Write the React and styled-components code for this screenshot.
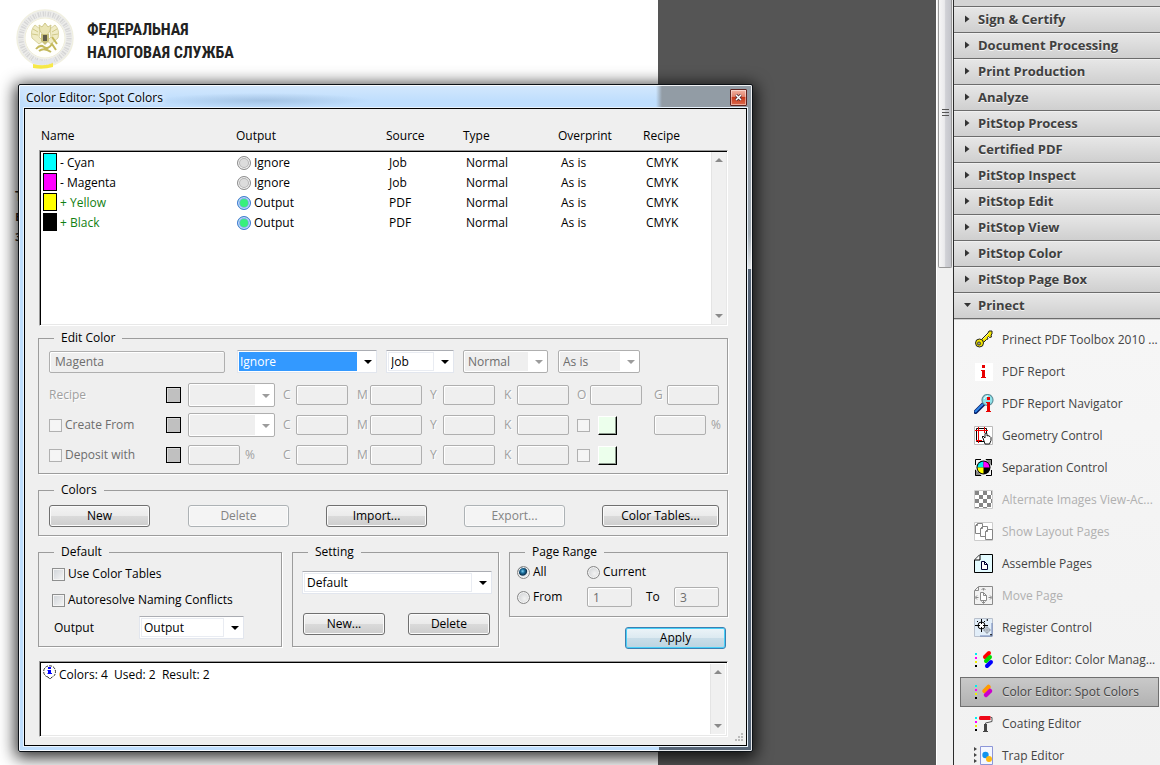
import React, { useState } from 'react';
import styled, { createGlobalStyle, css } from 'styled-components';

const GlobalStyle = createGlobalStyle`
  * {
    box-sizing: border-box;
  }

  body {
    margin: 0;
    overflow: hidden;
    font-family: 'Open Sans', 'Noto Sans', sans-serif;
    font-size: 12px;
    line-height: 16px;
    color: #000;
  }

  button, input, select {
    font: inherit;
    color: inherit;
    margin: 0;
  }
`;

/* ---------- application frame ---------- */

const Workspace = styled.div`
  display: flex;
  height: 100vh;
  background: #555;
`;

const Viewer = styled.main`
  position: relative;
  flex: 1;
  min-width: 0;
  overflow: hidden;
`;

const Sheet = styled.article`
  width: 658px;
  height: 100%;
  padding: 7px 15px;
  background: #fff;
`;

const Letterhead = styled.header`
  display: flex;
  align-items: center;
  gap: 12px;
  height: 64px;
`;

const LetterheadTitle = styled.h1`
  margin: 0;
  padding-top: 4px;
  font-family: 'Liberation Sans Narrow', 'Roboto Condensed', 'Open Sans Condensed', 'DejaVu Sans Condensed', sans-serif;
  font-size: 16px;
  line-height: 23px;
  font-weight: 700;
  color: #222;
`;

const SheetBody = styled.div`
  padding-top: 115px;
  font-size: 14px;
  line-height: 20px;
  font-weight: 600;
  color: #222;
`;

const DocScroll = styled.div`
  width: 17px;
  height: 100%;
  padding: 0 1px;
  background: #f0f0f0;
  border-left: 1px solid #fff;
`;

const DocThumb = styled.div`
  display: flex;
  align-items: center;
  justify-content: center;
  height: 35vh;
  padding-bottom: 41px;
  border: 1px solid #989898;
  border-top: 0;
  border-radius: 0 0 2px 2px;
  background: linear-gradient(to right, #f6f6f6 0%, #eaeaec 45%, #d0d1d6 55%, #c4c5cb 100%);
`;

/* ---------- dialog ---------- */

const Dialog = styled.section`
  position: absolute;
  left: 18px;
  top: 84px;
  width: 735px;
  padding: 0 5px 5px;
  border: 1px solid #0c1116;
  border-radius: 2px;
  background:
    linear-gradient(#566577, #566577) right bottom / 93px 6px no-repeat,
    linear-gradient(#566577, #566577) right bottom / 6px 482px no-repeat,
    linear-gradient(to right, transparent 637px, #929ca5 643px) 0 0 / 100% 24px no-repeat,
    linear-gradient(#8f9aa5, #9fa9b2 80%, #e6e9ec) right top / 6px 186px no-repeat,
    radial-gradient(closest-side, rgba(96, 130, 168, 0.3), transparent) 136px 8px / 215px 15px no-repeat,
    linear-gradient(#d4e8fd, #bfdefd 16px, #bfdefd);
  box-shadow: inset 0 0 0 1px rgba(255, 255, 255, 0.85), 0 3px 16px 3px rgba(0, 0, 0, 0.8);
`;

const TitleBar = styled.header`
  display: flex;
  align-items: center;
  justify-content: space-between;
  height: 23px;
  padding: 2px 0 0 2px;
`;

const Title = styled.h2`
  margin: 0;
  font-size: 12px;
  font-weight: 400;
  text-shadow: 0 0 5px #fff, 0 0 8px #fff;
`;

const CloseButton = styled.button`
  display: grid;
  place-items: center;
  width: 17px;
  height: 17px;
  padding: 0;
  border: 1px solid #5e2320;
  border-radius: 1px;
  background: linear-gradient(#f3b4a3, #e0806a 45%, #c8391a 50%, #dc6a4d);
  box-shadow: inset 0 0 0 1px rgba(255, 255, 255, 0.45);
`;

const Client = styled.div`
  position: relative;
  padding: 0 18px 8px 13px;
  border: 1px solid #000;
  background: #efefef;
  box-shadow: 0 0 0 1px #e9f3fd;
`;

const ListArea = styled.div`
  display: grid;
  grid-template-columns: 1fr 17px;
  grid-template-rows: 41px 176px;
  margin-left: 1px;
`;

const sunken = css`
  border: 1px solid #999;
  border-right-color: #fff;
  border-bottom-color: #fff;
  box-shadow: inset 1px 1px 0 #000, inset -1px -1px 0 #e8e8e8;
  background: #fff;
`;

const InkTable = styled.table`
  display: grid;
  grid-template-rows: subgrid;
  grid-area: 1 / 1 / 3 / 3;
`;

const InkHead = styled.thead`
  display: block;
  padding: 19px 0 0 2px;
`;

const InkBody = styled.tbody`
  display: block;
  padding: 2px 1px;
  ${sunken}
`;

const InkRow = styled.tr`
  display: grid;
  grid-template-columns: 195px 150px 77px 95px 85px 1fr;
  align-items: center;
`;

const HeadCell = styled.th`
  padding: 0;
  font-weight: 400;
  text-align: left;
`;

const Cell = styled.td`
  display: flex;
  align-items: center;
  gap: 3px;
  height: 20px;
  padding: 0 0 0 ${({ $inset = 3 }) => $inset}px;
  color: ${({ $used }) => ($used ? '#128012' : '#000')};
`;

const Ink = styled.span`
  align-self: flex-start;
  width: 14px;
  height: 18px;
  border: 1px solid #000;
  background: ${({ $color }) => $color};
`;

const Lamp = styled.span`
  width: 14px;
  height: 14px;
  border: 1px solid ${({ $on }) => ($on ? '#4677d6' : '#8e8e8e')};
  border-radius: 50%;
  background: ${({ $on }) => ($on ? '#38f07c' : '#dcdcdc')};
  box-shadow: inset 0 0 0 1px ${({ $on }) => ($on ? '#c8dcff' : '#f6f6f6')},
    inset 0 0 0 2px ${({ $on }) => ($on ? '#7fb0e8' : '#b4b4b4')};
`;

const ScrollTrack = styled.div`
  display: flex;
  flex-direction: column;
  justify-content: space-between;
  align-items: center;
  width: 15px;
  padding: 6px 0;
  background: #f0f0f0;
  border-left: 1px solid #e4e4e4;
`;

const ListScroll = styled(ScrollTrack)`
  grid-area: 2 / 2;
  margin: 2px 0;
`;

const Group = styled.fieldset`
  min-width: 0;
  margin: 0;
  padding: 0;
  border: 1px solid #9c9c9c;
  box-shadow: 1px 1px 0 #fff;
`;

const Legend = styled.legend`
  height: 16px;
  margin-left: 15px;
  padding: 0 7px;
`;

const GroupBody = styled.div`
  padding: ${({ $pad }) => $pad};
`;

const Stack = styled.div`
  display: flex;
  flex-direction: column;
  gap: 8px;
  padding-top: 4px;
`;

const Columns = styled.div`
  display: grid;
  grid-template-columns: 244px 207px 1fr;
  align-items: start;
  gap: 10px;
`;

/* ---------- controls ---------- */

const Button = styled.button`
  height: 22px;
  width: ${({ $width = 101 }) => $width}px;
  padding: 0;
  border: 1px solid #707070;
  border-radius: 3px;
  background: linear-gradient(#f3f3f3, #ebebeb 48%, #dadada 52%, #cdcdcd);
  box-shadow: inset 0 0 0 1px #fbfbfb;

  &:disabled {
    border-color: #adb2b5;
    background: #f4f4f4;
    color: #838383;
  }
`;

const PrimaryButton = styled(Button)`
  border-color: #3c7fb1;
  background: linear-gradient(#ecf4f8, #ddeaf1 48%, #c9dde8 52%, #bcd4e1);
  box-shadow: inset 0 0 0 1px #48d0f8;
`;

const Field = styled.input`
  width: ${({ $width = 52 }) => $width}px;
  height: ${({ $height = 20 }) => $height}px;
  padding: 0 5px;
  border: 1px solid #afafaf;
  border-radius: 2px;
  background: #efefef;
  color: #6d6d6d;
  box-shadow: inset 1px 1px 0 #fff;
`;

const ComboFrame = styled.span`
  display: grid;
  grid-template-columns: 1fr 18px;
  align-items: center;
  width: ${({ $width }) => $width}px;
  height: ${({ $height = 23 }) => $height}px;
  padding: 1px;
  border: 1px solid #e2e6ee;
  border-top-color: #abadb3;
  border-radius: 1px;
  background: #fff;

  ${({ $off }) => $off && css`
    border-color: #afafaf;
    border-radius: 2px;
  `}
`;

const NativeSelect = styled.select`
  appearance: none;
  width: 100%;
  height: 100%;
  padding: 0 2px;
  border: 1px solid #e9ecf2;
  border-radius: 0;
  outline: none;
  background: #fff;

  &:disabled {
    border-color: #efefef;
    background: #efefef;
    color: #6d6d6d;
    opacity: 1;
  }

  ${({ $active }) => $active && css`
    padding: 0;
    border-color: #39f;
    background: #39f;
    color: #fff;
  `}
`;

const Arrow = styled.svg`
  justify-self: end;
  margin: 1px 3px 0 0;
  fill: ${({ $off }) => ($off ? '#9c9c9c' : '#000')};
`;

const Check = styled.input`
  appearance: none;
  width: 13px;
  height: 13px;
  border: 1px solid #8e8f8f;
  background: linear-gradient(135deg, #cfd3d8, #f6f6f6);
  background-clip: content-box;
  padding: 1px;
  box-shadow: inset 0 0 0 1px #f4f4f4;

  &:disabled {
    border-color: #b1b1b1;
    background: #f5f5f5;
  }
`;

const Radio = styled.input`
  appearance: none;
  width: 13px;
  height: 13px;
  border: 1px solid #868686;
  border-radius: 50%;
  background: radial-gradient(circle at 60% 60%, #f2f2f2, #c9cccf);
  box-shadow: inset 0 0 0 1px #f4f4f4;

  &:checked {
    background: radial-gradient(circle at 42% 38%, #7fd0f2 0, #1b6f9e 2px, #0d3350 4px, #e4e8ec 5px);
  }
`;

const OptionLabel = styled.label`
  display: flex;
  align-items: center;
  gap: 3px;
  height: ${({ $height = 26 }) => $height}px;
  color: ${({ $off }) => ($off ? '#6d6d6d' : '#000')};
`;

const TopRow = styled.div`
  display: grid;
  grid-template-columns: 188px 149px 77px 95px 1fr;
  align-items: center;
  height: 23px;
  margin-bottom: 7px;
`;

const MixRow = styled.div`
  display: grid;
  grid-template-columns: 117px 22px 95px 74px 73px 74px 73px 77px 1fr;
  align-items: center;
  height: 30px;
`;

const Dim = styled.span`
  color: #a0a0a0;
  text-shadow: 1px 1px 0 #fff;
`;

const Channel = styled.label`
  display: grid;
  grid-template-columns: 13px 52px;
  align-items: center;
  color: #a0a0a0;
  text-shadow: 1px 1px 0 #fff;
`;

const Percent = styled.label`
  display: flex;
  align-items: center;
  gap: 5px;
  color: #a0a0a0;
`;

const Patch = styled.span`
  width: 15px;
  height: 16px;
  border: 1px solid #000;
  background: #c0c0c0;
  box-shadow: inset 1px 1px 0 #d8d8d8;
`;

const PickCell = styled.span`
  display: flex;
  align-items: center;
  gap: 8px;
`;

const ColorPick = styled.button`
  width: 19px;
  height: 19px;
  padding: 0;
  border: 1px solid #000;
  border-top-color: #fff;
  border-left-color: #fff;
  background: #ecffec;
  box-shadow: inset -1px -1px 0 #8c988c;
`;

const ButtonGrid = styled.div`
  display: grid;
  grid-template-columns: 139px 138px 138px 138px 1fr;
`;

const OutputRow = styled.div`
  display: grid;
  grid-template-columns: 85px auto;
  align-items: center;
  margin: 3px 0 0 2px;
`;

const ButtonPair = styled.div`
  display: flex;
  gap: 23px;
  padding: 19px 0 0 1px;
`;

const RangeGrid = styled.div`
  display: grid;
  grid-template-columns: 70px 59px 28px 1fr;
  align-items: center;
`;

const CurrentOption = styled(OptionLabel)`
  grid-column: span 3;
`;

const RangeColumn = styled.div`
  display: flex;
  flex-direction: column;
  align-items: flex-end;
  gap: 10px;
`;

const RangeGroup = styled(Group)`
  align-self: stretch;
`;

const ApplySlot = styled.div`
  display: flex;
  padding-right: 2px;
`;

const LogBox = styled.div`
  display: flex;
  height: 76px;
  margin: 12px 0 0 1px;
  padding: 2px;
  ${sunken}
`;

const LogText = styled.output`
  display: flex;
  flex: 1;
  gap: 2px;
  padding: 1px 0 0 1px;
  white-space: pre;
`;

const LogLine = styled.span`
  padding-top: 2px;
`;

const Grip = styled.svg`
  position: absolute;
  right: 3px;
  bottom: 3px;
`;

/* ---------- tools pane ---------- */

const Pane = styled.aside`
  flex: 0 0 207px;
  overflow: hidden;
  border-left: 1px solid #2b2b2b;
  background: linear-gradient(#fafafa, #f1f1f1);
  color: #444;
`;

const PaneTop = styled.div`
  height: 6px;
  background: #d4d4d4;
`;

const Section = styled.button`
  display: flex;
  align-items: center;
  gap: 6px;
  width: 100%;
  height: 26px;
  padding: 0 0 2px 10px;
  border: 0;
  border-top: 1px solid #6c6c6c;
  background: linear-gradient(#fafafa 0, #e6e6e6 1px, #cfcfcf);
  font-size: 13px;
  font-weight: 700;
  color: #404040;
  text-shadow: 0 1px 0 #f4f4f4;
`;

const ToolList = styled.ul`
  display: flex;
  flex-direction: column;
  gap: 2px;
  margin: 0;
  padding: 6px 1px 0 6px;
  border-top: 1px solid #6c6c6c;
  box-shadow: inset 0 1px 0 #cfcfcf;
  list-style: none;
`;

const Tool = styled.button`
  display: flex;
  align-items: center;
  gap: 8px;
  width: 100%;
  height: 30px;
  padding: 0 0 0 13px;
  border: 1px solid transparent;
  background: none;
  white-space: nowrap;
  color: #444;

  &:disabled {
    color: #b0b0b0;
  }

  ${({ $active }) => $active && css`
    border-color: #6f6f6f;
    background: linear-gradient(#c9c9c9, #b2b2b2);
    text-shadow: 0 1px 0 #d8d8d8;
  `}
`;

/* ---------- drawings ---------- */

const Emblem = () => (
  <svg width="60" height="64" viewBox="0 0 60 64" aria-hidden="true">
    <circle cx="30" cy="31" r="28" fill="#fdfdf9" stroke="#f1f0e0" strokeWidth="1.500" />
    <circle cx="30" cy="31" r="24" fill="none" stroke="#ececea" strokeWidth="7" />
    <circle cx="30" cy="31" r="24" fill="none" stroke="#d6d6d6" strokeWidth="5" strokeDasharray="1.500 1 .8 1.700" />
    <circle cx="30" cy="31" r="20" fill="#fffffc" stroke="#efedd8" strokeWidth="1" />
    <path d="M20 18q-5 5-3 13l7 6 4-3-4-4 1-8zM40 18q5 5 3 13l-7 6-4-3 4-4-1-8z" fill="#f0ecc6" stroke="#d8d29c" />
    <path d="M18 22l5 3M17 27l6 1M42 22l-5 3M43 27l-6 1" stroke="#d0c988" />
    <path d="M24 18l3 2 3-4 3 4 3-2-1 6-3 4h-4l-3-4z" fill="#eae5b4" stroke="#cfc88a" />
    <path d="M26 27h8v7l-4 4-4-4z" fill="#c9c17c" />
    <path d="M28 28h4v6h-4z" fill="#5e5b48" />
    <path d="M21 42q4-5 8-2t8-3l4 6M24 44q5-4 12 1M37 30l5 7" fill="none" stroke="#c4b95c" strokeWidth="2" />
    <path d="M17 52q12 4 22-1v4q-11 5-22 1z" fill="#e3e6ee" />
    <path d="M18 57q11 3 20-1v4q-10 3-20 1z" fill="#f8ea4a" />
  </svg>
);

const ScrollArrow = ({ down }) => (
  <svg width="8" height="4" viewBox="0 0 8 4" aria-hidden="true">
    <path d={down ? 'M0 0h8L4 4z' : 'M0 4h8L4 0z'} fill="#8a8a8a" />
  </svg>
);

const SectionMark = ({ open }) => (
  <svg width="8" height="8" viewBox="0 0 8 8" aria-hidden="true">
    <path d={open ? 'M0 2h7L3.500 6z' : 'M1 0.500v7L5.500 4z'} fill="#333" />
  </svg>
);

const InfoBubble = () => (
  <svg width="14" height="15" viewBox="0 0 14 15" aria-hidden="true">
    <path
      d="M5 12C-1 11-1 1 6.500.8S14 11 9 12l-2 2.200z"
      fill="#fff"
      stroke="#333"
      strokeDasharray="3 1"
    />
    <path d="M5 2h3v2H5zM4.500 5H8v3h1v1H4.500V8H5V6h-.5z" fill="#00f" />
  </svg>
);

const InkDots = () => (
  <>
    <path d="M1 3h2v2H1z" fill="#0ee" />
    <path d="M1 7h2v2H1z" fill="#f0f" />
    <path d="M1 11h2v2H1z" fill="#ee0" />
    <path d="M1 15h2v2H1z" fill="#000" />
  </>
);

const icons = {
  key: (
    <g fill="#f5e800" stroke="#222">
      <path d="M7.500 9.500L14 3l1-2h3v3l-1 1 .5 2-2 .5-1-1-1 1 .5 1.500-1.500.5-3 3z" />
      <circle cx="5.500" cy="13" r="4" />
      <circle cx="5" cy="13.500" r="1.600" fill="#999" strokeWidth="0.800" />
      <path d="M9 9l6-6" stroke="#fff8a0" strokeWidth="0.800" />
    </g>
  ),
  info: (
    <g>
      <path d="M1 1h18v18H1z" fill="#fff" />
      <path d="M8 3h3v3H8zM7 8h4v7h1v1H7v-1h1V9H7z" fill="#e80000" />
    </g>
  ),
  navigator: (
    <g>
      <path d="M1.500 18l8-8" stroke="#001a66" strokeWidth="4" strokeLinecap="round" />
      <path d="M1.500 17.500l7-7" stroke="#2f86e8" strokeWidth="2" strokeLinecap="round" />
      <circle cx="13.500" cy="6" r="5.500" fill="#8fe3ea" stroke="#5e8f9a" strokeWidth="1.200" />
      <path d="M10 5q1-3 4-3" stroke="#fff" fill="none" />
      <path d="M13 3h3v3h-3zM12 8h4v9h1v1h-5v-1h1V9h-1z" fill="#e80000" />
    </g>
  ),
  geometry: (
    <g>
      <path d="M0.500 0.500h18v18h-18z" fill="#fff" stroke="#bbb" />
      <path d="M2.500 2.500h10v13h-10z" fill="none" stroke="#000" />
      <path d="M4.500 1v16M1 4.500h13M10.500 1v6M2 14.500h6" stroke="#e00" />
      <path d="M9 12l-1-1 1-1 2 2V7.500l1-.5 1 .5V10l1-.5 1 .5 1 .5 1 1v3L15.500 18H11z" fill="#fff" stroke="#000" strokeWidth="0.900" />
    </g>
  ),
  separation: (
    <g>
      <path d="M11 1h7v7zM1 11v7h7z" fill="#888" />
      <path d="M1.500 7V1.500H7M12 1.500h5.500V7M1.500 12v5.500H7M12 17.500h5.500V12" fill="none" stroke="#000" />
      <circle cx="9.500" cy="9.500" r="7" fill="#000" />
      <path d="M9.500 9.500V3.500a6 6 0 0 0-6 6z" fill="#0ee" />
      <path d="M9.500 9.500h6a6 6 0 0 0-6-6z" fill="#f0f" />
      <path d="M9.500 9.500h-6a6 6 0 0 0 6 6z" fill="#ff0" />
    </g>
  ),
  checker: (
    <g>
      <path d="M0.500 0.500h18v18h-18z" fill="#fff" stroke="#ccc" />
      <path
        d="M1 1h4v4H1zM9 1h4v4H9zM5 5h4v4H5zM13 5h4v4h-4zM1 9h4v4H1zM9 9h4v4H9zM5 13h4v4H5zM13 13h4v4h-4zM17 1h1v4h-1zM17 9h1v4h-1zM1 17h4v1H1zM9 17h4v1H9z"
        fill="#858585"
      />
    </g>
  ),
  layout: (
    <g fill="#fff" stroke="#858585">
      <path d="M0.500 0.500h18v18h-18z" stroke="#ccc" />
      <path d="M1.500 11.500v-8l2-2h5v10zM1.500 3.500h2v-2" />
      <path d="M6.500 14.500v-8l2-2h5v10zM6.500 6.500h2v-2" />
      <path d="M11.500 17.500v-8l2-2h5v10zM11.500 9.500h2v-2" />
    </g>
  ),
  assemble: (
    <g>
      <path d="M0.500 18.500V6L6 .5h12.500v18z" fill="#e4fbff" stroke="#000" />
      <path d="M1 6h5V1" fill="#fff" stroke="#000" />
      <path d="M7.500 7.500h3l3 3v5h-6z" fill="#fff" stroke="#003" />
      <path d="M10.500 7.500v3h3" fill="none" stroke="#003" />
    </g>
  ),
  move: (
    <g fill="none" stroke="#8a8a8a">
      <path d="M0.500 18.500V4.500l4-4h14v18z" fill="#f2f2f2" />
      <path d="M1 4.500h3.500V1" />
      <path d="M6.500 6.500h3l3 3v5h-6zM9.500 6.500v3h3" fill="#fff" />
      <path d="M9.500 4.500v-2m-2 1.500l2-2 2 2M9.500 15v2m-2-1.500l2 2 2-2M4.500 11.500h-3m1.500-2l-2 2 2 2M14.500 11.500h3m-1.500-2l2 2-2 2" />
    </g>
  ),
  register: (
    <g fill="none">
      <path d="M0.500 0.500h18v18h-18z" fill="#e2eef9" stroke="#b9c0cc" />
      <path d="M18 5v13H6" stroke="#6f84b8" />
      <circle cx="7.500" cy="7.500" r="3.500" fill="#fff" stroke="#000" />
      <path d="M7.500 1v5M7.500 9v5M1 7.500h5M9 7.500h5" stroke="#000" />
      <circle cx="13" cy="12" r="2.500" stroke="#9aa2ac" />
      <path d="M13 8v8M9 12h8" stroke="#9aa2ac" />
      <path d="M12 2l2-1v2zM16 16h2l-1 2z" fill="#000" />
      <path d="M3 3l1 1M11 3l-1 1" stroke="#000" />
    </g>
  ),
  manage: (
    <g>
      <InkDots />
      <g strokeWidth="4" strokeLinecap="round">
        <path d="M11 7l4-4" stroke="#f00" />
        <path d="M12 11l4-4" stroke="#0d0" />
        <path d="M13 16l4-4" stroke="#00f" />
      </g>
    </g>
  ),
  spot: (
    <g>
      <InkDots />
      <g strokeWidth="4.500" strokeLinecap="round">
        <path d="M10.500 9l4-4" stroke="#f90" />
        <path d="M12 13l4-4" stroke="#c0c" />
      </g>
    </g>
  ),
  coating: (
    <g>
      <InkDots />
      <path d="M5 3.500q0-1.500 1.500-1.500h10v4h-10Q5 6 5 4.500z" fill="#ee0818" />
      <path d="M16.500 3.500h1.500v4l-6.500 1.500v2" fill="none" stroke="#555" />
      <path d="M10 10h3v7h1v1H9v-1h1z" fill="#444" />
    </g>
  ),
  trap: (
    <g>
      <path d="M0 1l3 2-3 2zM0 7l3 2-3 2zM0 13l3 2-3 2z" fill="#444" />
      <path d="M6.500 0.500h12v18h-12z" fill="#f4f7ff" stroke="#8c96d8" />
      <circle cx="11.500" cy="9" r="3.200" fill="#1093ee" />
      <circle cx="15" cy="13" r="3" fill="#fcb813" />
    </g>
  ),
};

const ToolIcon = ({ name }) => (
  <svg width="20" height="20" viewBox="0 0 20 20" aria-hidden="true">
    {icons[name]}
  </svg>
);

/* ---------- data ---------- */

const inks = [
  { name: 'Cyan', color: '#0ff', used: false, source: 'Job' },
  { name: 'Magenta', color: '#f0f', used: false, source: 'Job' },
  { name: 'Yellow', color: '#ff0', used: true, source: 'PDF' },
  { name: 'Black', color: '#000', used: true, source: 'PDF' },
];

const headings = ['Name', 'Output', 'Source', 'Type', 'Overprint', 'Recipe'];

const sections = [
  'Sign & Certify',
  'Document Processing',
  'Print Production',
  'Analyze',
  'PitStop Process',
  'Certified PDF',
  'PitStop Inspect',
  'PitStop Edit',
  'PitStop View',
  'PitStop Color',
  'PitStop Page Box',
  'Prinect',
];

const tools = [
  { icon: 'key', label: 'Prinect PDF Toolbox 2010 ...' },
  { icon: 'info', label: 'PDF Report' },
  { icon: 'navigator', label: 'PDF Report Navigator' },
  { icon: 'geometry', label: 'Geometry Control' },
  { icon: 'separation', label: 'Separation Control' },
  { icon: 'checker', label: 'Alternate Images View-Ac...', disabled: true },
  { icon: 'layout', label: 'Show Layout Pages', disabled: true },
  { icon: 'assemble', label: 'Assemble Pages' },
  { icon: 'move', label: 'Move Page', disabled: true },
  { icon: 'register', label: 'Register Control' },
  { icon: 'manage', label: 'Color Editor: Color Manag...' },
  { icon: 'spot', label: 'Color Editor: Spot Colors' },
  { icon: 'coating', label: 'Coating Editor' },
  { icon: 'trap', label: 'Trap Editor' },
];

/* ---------- pieces ---------- */

const Combo = ({ label, options, width, height, disabled, active }) => (
  <ComboFrame $width={width} $height={height} $off={disabled}>
    <NativeSelect aria-label={label} disabled={disabled} $active={active}>
      {options.map((option) => (
        <option key={option}>{option}</option>
      ))}
    </NativeSelect>
    <Arrow $off={disabled} width="8" height="4" viewBox="0 0 8 4" aria-hidden="true">
      <path d="M0 0h8L4 4z" />
    </Arrow>
  </ComboFrame>
);

const Channels = ({ names }) =>
  names.map((name) => (
    <Channel key={name}>
      {name}
      <Field disabled />
    </Channel>
  ));

const PickPair = ({ label }) => (
  <PickCell>
    <Check type="checkbox" disabled aria-label={`${label} spot`} />
    <ColorPick aria-label={`${label} color`} />
  </PickCell>
);

const InkList = () => (
  <ListArea>
    <InkTable>
      <InkHead>
        <InkRow>
          {headings.map((heading) => (
            <HeadCell key={heading}>{heading}</HeadCell>
          ))}
        </InkRow>
      </InkHead>
      <InkBody>
        {inks.map(({ name, color, used, source }) => (
          <InkRow key={name}>
            <Cell $inset={2} $used={used}>
              <Ink $color={color} />
              {used ? '+' : '-'} {name}
            </Cell>
            <Cell $inset={1}>
              <Lamp $on={used} />
              {used ? 'Output' : 'Ignore'}
            </Cell>
            <Cell>{source}</Cell>
            <Cell>Normal</Cell>
            <Cell>As is</Cell>
            <Cell>CMYK</Cell>
          </InkRow>
        ))}
      </InkBody>
    </InkTable>
    <ListScroll>
      <ScrollArrow />
      <ScrollArrow down />
    </ListScroll>
  </ListArea>
);

const EditColor = () => (
  <Group>
    <Legend>Edit Color</Legend>
    <GroupBody $pad="4px 8px 3px 10px">
      <TopRow>
        <Field aria-label="Color name" defaultValue="Magenta" disabled $width={176} $height={22} />
        <Combo label="Output" options={['Ignore', 'Output']} width={140} active />
        <Combo label="Source" options={['Job', 'PDF']} width={68} />
        <Combo label="Type" options={['Normal']} width={85} disabled />
        <Combo label="Overprint" options={['As is']} width={82} disabled />
      </TopRow>
      <MixRow>
        <Dim>Recipe</Dim>
        <Patch />
        <Combo label="Recipe" options={['']} width={87} height={24} disabled />
        <Channels names={['C', 'M', 'Y', 'K', 'O', 'G']} />
      </MixRow>
      <MixRow>
        <OptionLabel $off>
          <Check type="checkbox" disabled />
          Create From
        </OptionLabel>
        <Patch />
        <Combo label="Create from" options={['']} width={87} height={24} disabled />
        <Channels names={['C', 'M', 'Y', 'K']} />
        <PickPair label="Create from" />
        <Percent>
          <Field disabled />%
        </Percent>
      </MixRow>
      <MixRow>
        <OptionLabel $off>
          <Check type="checkbox" disabled />
          Deposit with
        </OptionLabel>
        <Patch />
        <Percent>
          <Field disabled />%
        </Percent>
        <Channels names={['C', 'M', 'Y', 'K']} />
        <PickPair label="Deposit with" />
      </MixRow>
    </GroupBody>
  </Group>
);

const PageRange = ({ range, onChange }) => (
  <RangeGroup>
    <Legend>Page Range</Legend>
    <GroupBody $pad="0 7px 6px">
      <RangeGrid>
        <OptionLabel $height={24}>
          <Radio type="radio" name="range" checked={range === 'all'} onChange={() => onChange('all')} />
          All
        </OptionLabel>
        <CurrentOption $height={24}>
          <Radio type="radio" name="range" checked={range === 'current'} onChange={() => onChange('current')} />
          Current
        </CurrentOption>
        <OptionLabel>
          <Radio type="radio" name="range" checked={range === 'from'} onChange={() => onChange('from')} />
          From
        </OptionLabel>
        <Field aria-label="First page" defaultValue="1" disabled={range !== 'from'} $width={45} />
        <label htmlFor="last-page">To</label>
        <Field id="last-page" defaultValue="3" disabled={range !== 'from'} $width={45} />
      </RangeGrid>
    </GroupBody>
  </RangeGroup>
);

const SpotColorDialog = () => {
  const [range, setRange] = useState('all');

  return (
    <Dialog role="dialog" aria-labelledby="dialog-title">
      <TitleBar>
        <Title id="dialog-title">Color Editor: Spot Colors</Title>
        <CloseButton aria-label="Close">
          <svg width="7" height="7" viewBox="0 0 7 7" aria-hidden="true">
            <path d="M1 1l5 5M6 1L1 6" stroke="#4a2a33" strokeWidth="3" />
            <path d="M1 1l5 5M6 1L1 6" stroke="#fff" strokeWidth="1.500" />
          </svg>
        </CloseButton>
      </TitleBar>
      <Client>
        <InkList />
        <Stack>
          <EditColor />
          <Group>
            <Legend>Colors</Legend>
            <GroupBody $pad="7px 8px 8px 10px">
              <ButtonGrid>
                <Button>New</Button>
                <Button disabled>Delete</Button>
                <Button>Import...</Button>
                <Button disabled>Export...</Button>
                <Button $width={117}>Color Tables...</Button>
              </ButtonGrid>
            </GroupBody>
          </Group>
          <Columns>
            <Group>
              <Legend>Default</Legend>
              <GroupBody $pad="1px 13px 7px">
                <OptionLabel>
                  <Check type="checkbox" />
                  Use Color Tables
                </OptionLabel>
                <OptionLabel>
                  <Check type="checkbox" />
                  Autoresolve Naming Conflicts
                </OptionLabel>
                <OutputRow>
                  <span>Output</span>
                  <Combo label="Default output" options={['Output', 'Ignore']} width={105} />
                </OutputRow>
              </GroupBody>
            </Group>
            <Group>
              <Legend>Setting</Legend>
              <GroupBody $pad="11px 7px 11px 9px">
                <Combo label="Setting" options={['Default']} width={190} />
                <ButtonPair>
                  <Button $width={82}>New...</Button>
                  <Button $width={82}>Delete</Button>
                </ButtonPair>
              </GroupBody>
            </Group>
            <RangeColumn>
              <PageRange range={range} onChange={setRange} />
              <ApplySlot>
                <PrimaryButton>Apply</PrimaryButton>
              </ApplySlot>
            </RangeColumn>
          </Columns>
        </Stack>
        <LogBox>
          <LogText>
            <InfoBubble />
            <LogLine>{'Colors: 4  Used: 2  Result: 2'}</LogLine>
          </LogText>
          <ScrollTrack>
            <ScrollArrow />
            <ScrollArrow down />
          </ScrollTrack>
        </LogBox>
        <Grip width="9" height="9" viewBox="0 0 9 9" aria-hidden="true">
          <path d="M7 0h2v2H7zM7 3h2v2H7zM7 6h2v2H7zM4 3h2v2H4zM4 6h2v2H4zM1 6h2v2H1z" fill="#bbb" />
        </Grip>
      </Client>
    </Dialog>
  );
};

const ToolsPane = () => (
  <Pane>
    <PaneTop />
    {sections.map((section) => (
      <Section key={section}>
        <SectionMark open={section === 'Prinect'} />
        {section}
      </Section>
    ))}
    <ToolList>
      {tools.map(({ icon, label, disabled }) => (
        <li key={label}>
          <Tool disabled={disabled} $active={icon === 'spot'}>
            <ToolIcon name={icon} />
            {label}
          </Tool>
        </li>
      ))}
    </ToolList>
  </Pane>
);

const App = () => (
  <Workspace>
    <GlobalStyle />
    <Viewer>
      <Sheet>
        <Letterhead>
          <Emblem />
          <LetterheadTitle>
            ФЕДЕРАЛЬНАЯ
            <br />
            НАЛОГОВАЯ СЛУЖБА
          </LetterheadTitle>
        </Letterhead>
        <SheetBody>
          Т
          <br />
          в
          <br />
          з
        </SheetBody>
      </Sheet>
      <SpotColorDialog />
    </Viewer>
    <DocScroll>
      <DocThumb>
        <svg width="7" height="8" viewBox="0 0 7 8" aria-hidden="true">
          <path d="M0 .5h7M0 3.500h7M0 6.500h7" stroke="#555" />
        </svg>
      </DocThumb>
    </DocScroll>
    <ToolsPane />
  </Workspace>
);

export default App;
